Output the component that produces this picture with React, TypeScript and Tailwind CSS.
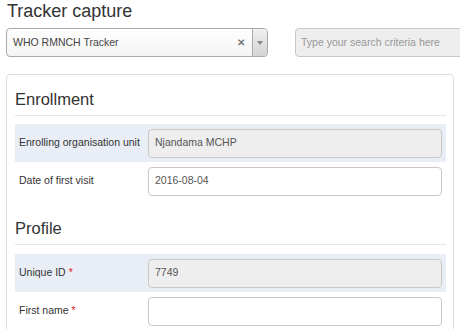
import React from 'react'

interface FieldRow {
  label: string
  value: string
  required?: boolean
  readOnly?: boolean
}

const enrollmentRows: FieldRow[] = [
  { label: 'Enrolling organisation unit', value: 'Njandama MCHP', readOnly: true },
  { label: 'Date of first visit', value: '2016-08-04' },
]

const profileRows: FieldRow[] = [
  { label: 'Unique ID', value: '7749', required: true, readOnly: true },
  { label: 'First name', value: '', required: true },
]

function SectionHeading({ title, first }: { title: string; first?: boolean }) {
  return (
    <div
      className={`h-[41px] border-b border-[#e5e5e5] pt-[14px] text-[16.5px] leading-[20px] text-[#333] ${
        first ? '' : 'mt-[4px]'
      }`}
    >
      {title}
    </div>
  )
}

function Row({ row }: { row: FieldRow }) {
  return (
    <div className={`flex h-[38px] items-center pl-[4px] pr-[4px] ${row.readOnly ? 'bg-[#e9eef6]' : ''}`}>
      <div className="w-[129px] shrink-0 text-[10.5px] text-[#333]">
        {row.label}
        {row.required && <span className="ml-[3px] text-[#e02020]">*</span>}
      </div>
      <div
        className={`flex h-[29px] flex-1 items-center rounded-[4px] border px-[6px] text-[10.5px] text-[#555] ${
          row.readOnly ? 'border-[#c8c8c8] bg-[#eeeeee]' : 'border-[#c8c8c8] bg-white'
        }`}
      >
        {row.value}
      </div>
    </div>
  )
}

export default function App() {
  return (
    <div
      className="h-[329px] w-[460px] overflow-hidden bg-white px-[6px]"
      style={{ fontFamily: '"Liberation Sans", Arial, sans-serif' }}
    >
      <h1 className="pl-[1px] text-[18px] leading-[22px] text-[#333]">Tracker capture</h1>

      {/* Program selector + search */}
      <div className="mt-[6px] flex h-[29px] items-stretch">
        <div className="flex w-[262px] shrink-0 items-stretch overflow-hidden rounded-[4px] border border-[#aaa] bg-gradient-to-b from-white to-[#f4f4f4]">
          <div className="flex flex-1 items-center pl-[6px] text-[10.5px] text-[#444]">WHO RMNCH Tracker</div>
          <div className="flex w-[22px] items-center justify-center text-[10px] font-bold text-[#777]">✕</div>
          <div className="flex w-[15px] items-center justify-center border-l border-[#aaa] bg-gradient-to-b from-[#f0f0f0] to-[#d4d4d4]">
            <svg width="6" height="4" viewBox="0 0 6 4">
              <path d="M0 0 L6 0 L3 4 Z" fill="#888" />
            </svg>
          </div>
        </div>
        <div className="ml-[27px] flex w-[240px] shrink-0 items-center rounded-[4px] border border-[#c8c8c8] bg-[#eeeeee] pl-[5px] text-[10.5px] text-[#999]">
          Type your search criteria here
        </div>
      </div>

      {/* Registration panel */}
      <div className="mt-[17px] h-[400px] w-[448px] rounded-[4px] border border-[#ddd] pl-[8px] pr-[7px]">
        <SectionHeading title="Enrollment" first />
        <div className="mt-[8px]">
          {enrollmentRows.map((r) => (
            <Row key={r.label} row={r} />
          ))}
        </div>

        <SectionHeading title="Profile" />
        <div className="mt-[9px]">
          {profileRows.map((r) => (
            <Row key={r.label} row={r} />
          ))}
        </div>
      </div>
    </div>
  )
}
